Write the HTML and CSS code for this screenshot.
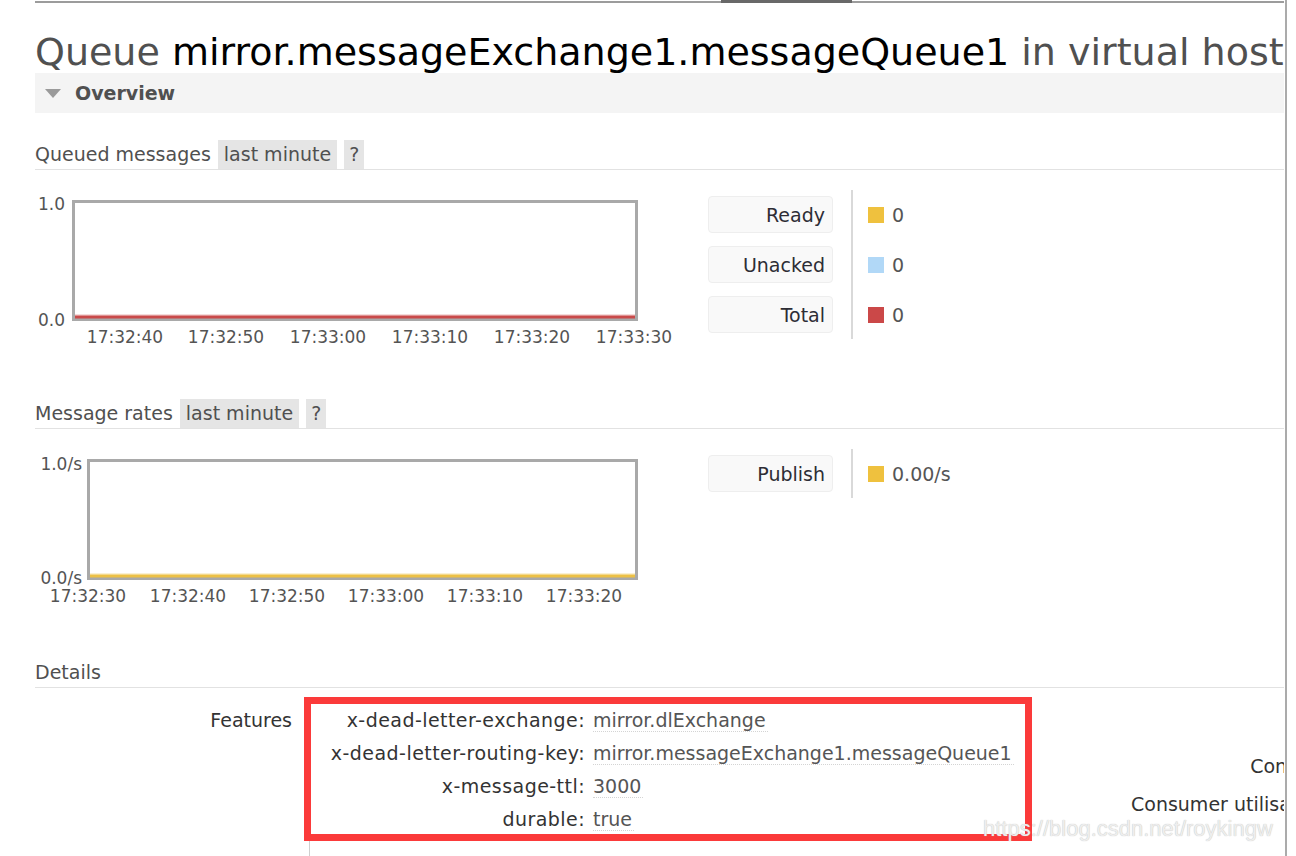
FILE: index.html
```html
<!DOCTYPE html>
<html lang="en">
<head>
<meta charset="utf-8">
<title>Queue mirror.messageExchange1.messageQueue1</title>
<link rel="stylesheet" href="styles.css">
</head>
<body>
<div class="page">
  <div class="main">
    <div class="topbar"><div class="tab"></div></div>
    <h1 class="title"><span class="muted">Queue</span> mirror.messageExchange1.messageQueue1 <span class="muted">in virtual host /</span></h1>

    <div class="section-bar"><span class="tri"></span><span class="bar-title">Overview</span></div>

    <div class="sub-head"><span class="sub-title">Queued messages</span><span class="chip">last minute</span><span class="chip help">?</span></div>
    <div class="chart-row">
      <svg class="chart" width="673" height="160" viewBox="0 0 673 160">
        <rect class="plot" x="38.5" y="11.5" width="563" height="118"/>
        <line class="glow-red" x1="40" y1="125" x2="600" y2="125"/>
        <line class="line-red" x1="40" y1="127" x2="600" y2="127"/>
        <text class="axis" x="30" y="20" text-anchor="end">1.0</text>
        <text class="axis" x="30" y="136" text-anchor="end">0.0</text>
        <text class="axis" x="90" y="153" text-anchor="middle">17:32:40</text>
        <text class="axis" x="191" y="153" text-anchor="middle">17:32:50</text>
        <text class="axis" x="293" y="153" text-anchor="middle">17:33:00</text>
        <text class="axis" x="395" y="153" text-anchor="middle">17:33:10</text>
        <text class="axis" x="497" y="153" text-anchor="middle">17:33:20</text>
        <text class="axis" x="599" y="153" text-anchor="middle">17:33:30</text>
      </svg>
      <div class="legend">
        <div class="legend-labels">
          <div class="legend-label">Ready</div>
          <div class="legend-label">Unacked</div>
          <div class="legend-label">Total</div>
        </div>
        <div class="legend-values">
          <div class="legend-value"><span class="swatch yellow"></span>0</div>
          <div class="legend-value"><span class="swatch blue"></span>0</div>
          <div class="legend-value"><span class="swatch red"></span>0</div>
        </div>
      </div>
    </div>

    <div class="sub-head spaced"><span class="sub-title">Message rates</span><span class="chip">last minute</span><span class="chip help">?</span></div>
    <div class="chart-row">
      <svg class="chart" width="673" height="160" viewBox="0 0 673 160">
        <rect class="plot" x="53.5" y="11.5" width="548" height="118"/>
        <line class="glow-yellow" x1="55" y1="125" x2="600" y2="125"/>
        <line class="line-yellow" x1="55" y1="127" x2="600" y2="127"/>
        <text class="axis" x="47" y="21" text-anchor="end">1.0/s</text>
        <text class="axis" x="47" y="135" text-anchor="end">0.0/s</text>
        <text class="axis" x="53" y="153" text-anchor="middle">17:32:30</text>
        <text class="axis" x="153" y="153" text-anchor="middle">17:32:40</text>
        <text class="axis" x="252" y="153" text-anchor="middle">17:32:50</text>
        <text class="axis" x="351" y="153" text-anchor="middle">17:33:00</text>
        <text class="axis" x="450" y="153" text-anchor="middle">17:33:10</text>
        <text class="axis" x="549" y="153" text-anchor="middle">17:33:20</text>
      </svg>
      <div class="legend">
        <div class="legend-labels">
          <div class="legend-label">Publish</div>
        </div>
        <div class="legend-values">
          <div class="legend-value"><span class="swatch yellow"></span>0.00/s</div>
        </div>
      </div>
    </div>

    <div class="sub-head spaced"><span class="sub-title">Details</span></div>
    <div class="details">
      <div class="features">
        <div class="feat-label">Features</div>
        <div class="feat-cell">
          <div class="k">x-dead-letter-exchange:</div><div class="v"><span class="val">mirror.dlExchange</span></div>
          <div class="k">x-dead-letter-routing-key:</div><div class="v"><span class="val">mirror.messageExchange1.messageQueue1</span></div>
          <div class="k">x-message-ttl:</div><div class="v"><span class="val">3000</span></div>
          <div class="k">durable:</div><div class="v"><span class="val">true</span></div>
        </div>
      </div>
      <div class="side">
        <div class="side-row">Consumers</div>
        <div class="side-row second">Consumer utilisation</div>
      </div>
      <div class="highlight"></div>
      <div class="watermark">https://blog.csdn.net/roykingw</div>
    </div>
  </div>
  <div class="edge"></div>
</div>
</body>
</html>
```
FILE: styles.css
```css
html, body {
  margin: 0;
  padding: 0;
  height: 100%;
}
body {
  font-family: "DejaVu Sans", Verdana, sans-serif;
  font-size: 19px;
  color: #555;
  background: #fff;
  overflow: hidden;
}
.page {
  display: flex;
  height: 856px;
}
.main {
  flex: none;
  width: 1249px;
  margin-left: 35px;
  overflow: hidden;
  position: relative;
}
.edge {
  flex: none;
  width: 2px;
  margin-left: 1px;
  background: #ababab;
}
.topbar {
  height: 4px;
  background: linear-gradient(#fff 1px, #9c9c9c 1px, #9c9c9c 3px, #fff 3px);
}
.tab {
  margin-left: 686px;
  width: 131px;
  height: 3px;
  background: #686868;
}
.title {
  margin: 28px 0 0;
  font-size: 38px;
  font-weight: normal;
  line-height: 41px;
  white-space: nowrap;
  color: #000;
}
.title .muted {
  color: #505050;
}
.section-bar {
  height: 40px;
  background: #f4f4f4;
  display: flex;
  align-items: center;
}
.tri {
  width: 0;
  height: 0;
  border-left: 8px solid transparent;
  border-right: 8px solid transparent;
  border-top: 9px solid #9a9a9a;
  margin-left: 10px;
  margin-right: 14px;
}
.bar-title {
  font-weight: bold;
  color: #505050;
}
.sub-head {
  display: flex;
  align-items: stretch;
  margin-top: 27px;
  line-height: 29px;
  border-bottom: 1px solid #e2e2e2;
  white-space: nowrap;
}
.sub-head.spaced {
  margin-top: 49px;
}
.sub-title {
  color: #505050;
}
.chip {
  background: #e5e5e5;
  padding: 0 6px;
  margin-left: 7px;
  color: #505050;
}
.chip.help {
  padding: 0 5px;
}
.chart-row {
  display: flex;
  margin-top: 20px;
}
.chart {
  flex: none;
  display: block;
}
.plot {
  fill: #fff;
  stroke: #a9a9a9;
  stroke-width: 3;
}
.line-red {
  stroke: #c94a4a;
  stroke-width: 3;
}
.glow-red {
  stroke: #f1cfcf;
  stroke-width: 1.5;
}
.line-yellow {
  stroke: #ecc045;
  stroke-width: 3;
}
.glow-yellow {
  stroke: #f8ebc4;
  stroke-width: 1.5;
}
.axis {
  font-family: "DejaVu Sans", Verdana, sans-serif;
  font-size: 17px;
  fill: #545454;
}
.legend {
  display: flex;
  align-items: flex-start;
}
.legend-labels {
  display: flex;
  flex-direction: column;
  gap: 13px;
  padding: 6px 18px 6px 0;
  border-right: 2px solid #d9d9d9;
}
.legend-label {
  width: 125px;
  height: 37px;
  box-sizing: border-box;
  border: 1px solid #eeeeee;
  border-radius: 4px;
  background: #f9f9f9;
  text-align: right;
  padding: 2px 7px 0 0;
  line-height: 33px;
  color: #2d2d35;
}
.legend-values {
  display: flex;
  flex-direction: column;
  gap: 13px;
  padding: 6px 0 0 15px;
}
.legend-value {
  height: 37px;
  display: flex;
  align-items: center;
  gap: 8px;
  color: #555;
}
.swatch {
  width: 16px;
  height: 16px;
}
.swatch.yellow { background: #efc13e; }
.swatch.blue { background: #b1d8f7; }
.swatch.red { background: #cb4848; }

.details {
  display: flex;
  margin-top: 16px;
  position: relative;
}
.features {
  flex: none;
  width: 1096px;
  display: flex;
  align-items: stretch;
}
.feat-label {
  flex: none;
  width: 274px;
  box-sizing: border-box;
  padding-right: 17px;
  text-align: right;
  line-height: 33px;
  color: #333;
}
.feat-cell {
  border-left: 1px solid #cfcfcf;
  display: grid;
  grid-template-columns: 275px auto;
  column-gap: 8px;
  align-content: start;
  line-height: 33px;
  padding-bottom: 200px;
}
.k {
  text-align: right;
  color: #333;
  white-space: nowrap;
  letter-spacing: 0.45px;
}
.v {
  color: #555;
  white-space: nowrap;
}
.val {
  border-bottom: 1px dotted #d4d4d4;
  padding-right: 2px;
}
.side {
  flex: none;
  width: 226px;
  padding-top: 43px;
  text-align: right;
  color: #333;
  white-space: nowrap;
}
.side-row {
  line-height: 38px;
}
.side-row.second {
  padding-right: 30px;
}
.highlight {
  position: absolute;
  left: 269px;
  top: -7px;
  width: 728px;
  height: 144px;
  box-sizing: border-box;
  border: 7px solid #fb3a3a;
}
.watermark {
  position: absolute;
  left: 948px;
  top: 112px;
  font-family: "Liberation Sans", Arial, sans-serif;
  font-size: 22px;
  line-height: 26px;
  color: #eeeeee;
  text-shadow: 0 0 1px #b5b5b5;
  white-space: nowrap;
}
```
